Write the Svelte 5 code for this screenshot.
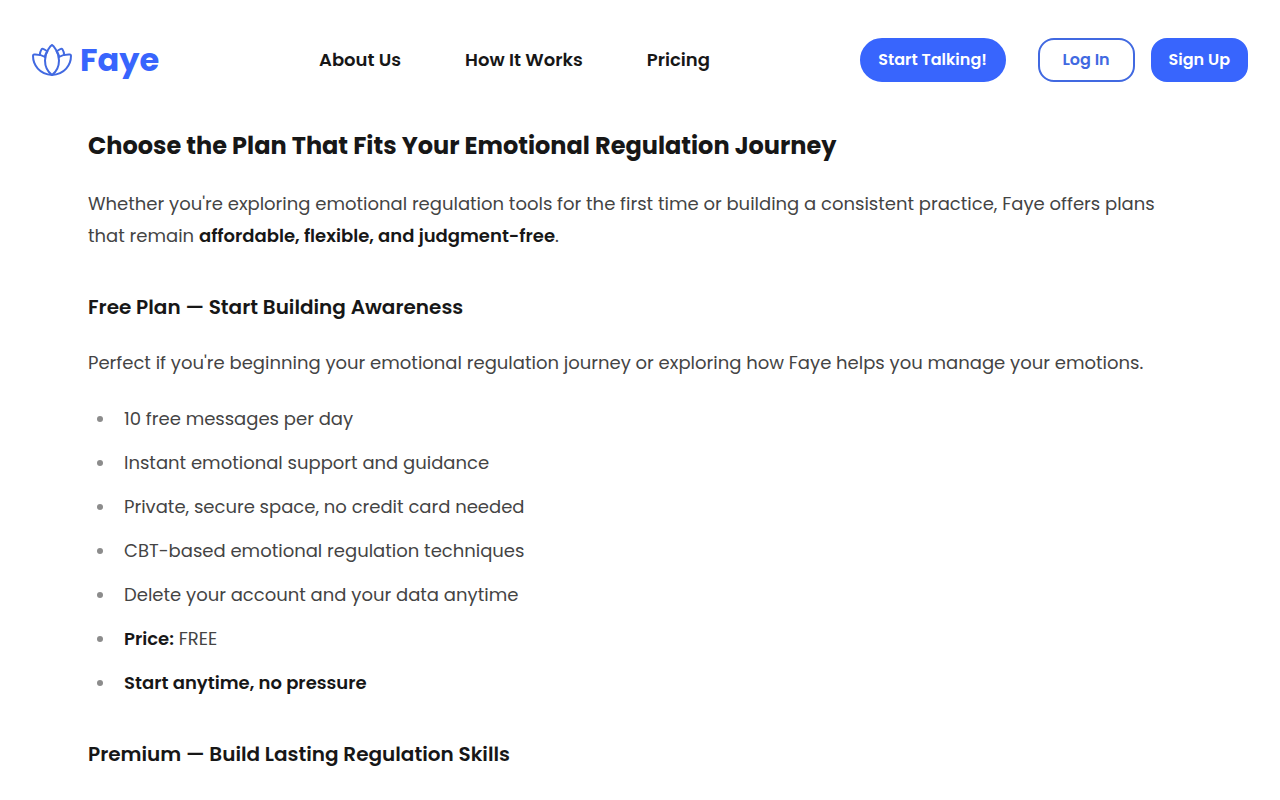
<script>
  const navLinks = ['About Us', 'How It Works', 'Pricing'];
  const freeFeatures = [
    { text: '10 free messages per day' },
    { text: 'Instant emotional support and guidance' },
    { text: 'Private, secure space, no credit card needed' },
    { text: 'CBT-based emotional regulation techniques' },
    { text: 'Delete your account and your data anytime' },
    { strong: 'Price:', text: ' FREE' },
    { strong: 'Start anytime, no pressure', text: '' }
  ];
</script>

<header>
  <a class="logo" href="#home">
    <svg viewBox="0 0 40 32" width="40" height="32" aria-hidden="true">
      <path d="M20 1C18.300 1.600 17.200 4 15.800 6.300C14 9.300 13 12.500 13 16.500C13 22.500 16 28 20 31C24 28 27 22.500 27 16.500C27 12.500 26 9.300 24.200 6.300C22.800 4 21.700 1.600 20 1Z" />
      <path d="M13.200 13C10 11 6 10.300 2 10.500Q1 10.600 1 11.800C1 21 7.500 30.500 20 31C32.500 30.500 39 21 39 11.800Q39 10.600 38 10.500C34 10.300 30 11 26.800 13" />
      <path d="M7.800 11C8 8.500 8.600 6.800 9.600 5.300Q10.200 4.400 11.200 4.900C12.800 5.600 14 6.400 15.300 7.500M12.800 12.800C13.200 10.800 14 9 15.300 7.500" />
      <path d="M32.200 11C32 8.500 31.400 6.800 30.400 5.300Q29.800 4.400 28.800 4.900C27.200 5.600 26 6.400 24.700 7.500M27.200 12.800C26.800 10.800 26 9 24.700 7.500" />
    </svg>
    <span>Faye</span>
  </a>

  <nav aria-label="Main">
    {#each navLinks as link}
      <a href="#{link.toLowerCase().replaceAll(' ', '-')}">{link}</a>
    {/each}
  </nav>

  <div class="actions">
    <button class="talk" type="button">Start Talking!</button>
    <div class="account">
      <button class="outline" type="button">Log In</button>
      <button type="button">Sign Up</button>
    </div>
  </div>
</header>

<main>
  <h2>Choose the Plan That Fits Your Emotional Regulation Journey</h2>
  <p>
    Whether you're exploring emotional regulation tools for the first time or building a consistent
    practice, Faye offers plans that remain
    <strong>affordable, flexible, and judgment-free</strong>.
  </p>

  <h3>Free Plan — Start Building Awareness</h3>
  <p>
    Perfect if you're beginning your emotional regulation journey or exploring how Faye helps you
    manage your emotions.
  </p>
  <ul>
    {#each freeFeatures as item}
      <li><span>{#if item.strong}<strong>{item.strong}</strong>{/if}{item.text}</span></li>
    {/each}
  </ul>

  <h3>Premium — Build Lasting Regulation Skills</h3>
</main>

<style>
  :global(body) {
    margin: 0;
    background: #fff;
    font-family: Poppins, Inter, sans-serif;
    color: #171717;
  }

  header {
    display: grid;
    grid-template-columns: 287px 1fr auto;
    align-items: center;
    padding: 38px 32px;
  }

  a {
    color: inherit;
    text-decoration: none;
  }

  .logo {
    display: flex;
    align-items: center;
    gap: 8px;
    color: #3865fd;
    font-size: 32px;
    font-weight: 700;
    line-height: 44px;
  }

  .logo svg {
    fill: none;
    stroke: #4169e1;
    stroke-width: 2;
    stroke-linejoin: round;
    stroke-linecap: round;
  }

  nav {
    display: flex;
    gap: 64px;
    font-size: 18px;
    font-weight: 600;
    line-height: 28px;
    white-space: nowrap;
  }

  .actions {
    display: flex;
    gap: 32px;
  }

  .account {
    display: flex;
    gap: 16px;
  }

  button {
    min-width: 97px;
    height: 44px;
    padding: 0 16px;
    border: 2px solid #3865fd;
    border-radius: 16px;
    background: #3865fd;
    color: #fff;
    font: inherit;
    font-size: 16px;
    font-weight: 600;
    line-height: 24px;
    white-space: nowrap;
    cursor: pointer;
  }

  .talk {
    min-width: 146px;
    border-radius: 22px;
  }

  .outline {
    border-color: #4169e1;
    background: #fff;
    color: #4169e1;
  }

  main {
    max-width: 1104px;
    margin: 0 auto;
    padding: 8px 32px 32px;
    font-size: 18px;
    line-height: 32px;
    color: #444;
  }

  h2,
  h3,
  strong {
    color: #171717;
    font-weight: 600;
  }

  h2 {
    margin: 0 0 24px;
    font-size: 24px;
    font-weight: 700;
    line-height: 36px;
  }

  h3 {
    margin: 40px 0 25px;
    font-size: 20px;
    line-height: 30px;
  }

  p {
    margin: 0 0 24px;
  }

  ul {
    display: grid;
    gap: 12px;
    margin: 0;
    padding: 0 0 0 9px;
    list-style: none;
  }

  li {
    display: flex;
    align-items: center;
    gap: 21px;
  }

  li::before {
    content: '';
    width: 6px;
    height: 6px;
    border-radius: 50%;
    background: #8c8c8c;
  }
</style>
